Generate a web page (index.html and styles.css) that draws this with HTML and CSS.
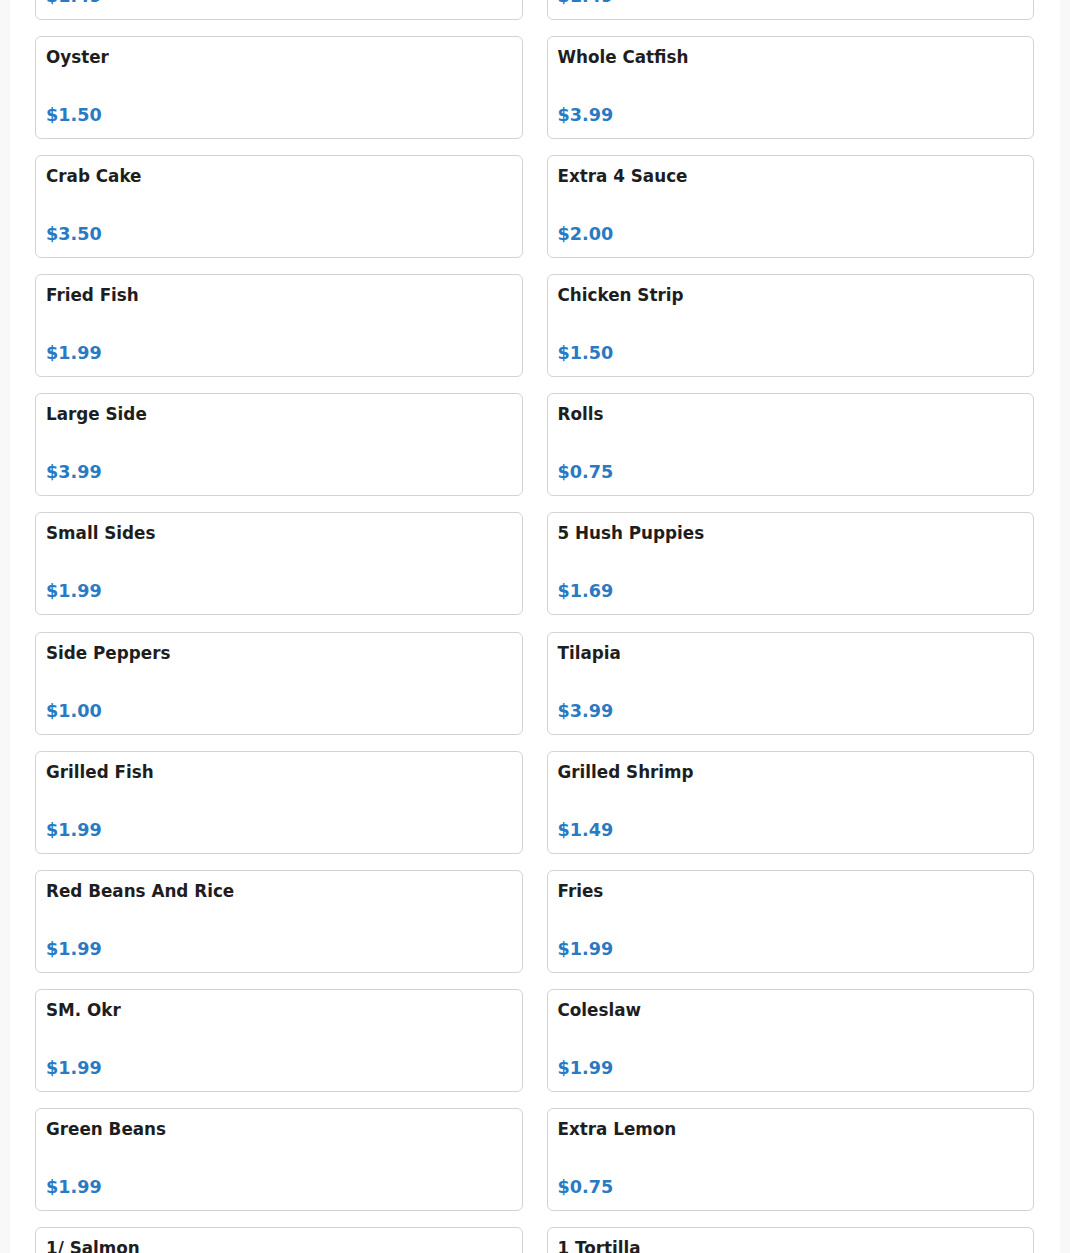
FILE: index.html
```html
<!DOCTYPE html>
<html lang="en">
<head>
<meta charset="utf-8">
<title>Menu</title>
<link rel="stylesheet" href="styles.css">
</head>
<body>
<main class="page">
  <div class="menu-grid">
    <div class="item"><h3 class="name">Shrimp</h3><p class="price">$1.49</p></div>
    <div class="item"><h3 class="name">Fried Shrimp</h3><p class="price">$1.49</p></div>
    <div class="item"><h3 class="name">Oyster</h3><p class="price">$1.50</p></div>
    <div class="item"><h3 class="name">Whole Catfish</h3><p class="price">$3.99</p></div>
    <div class="item"><h3 class="name">Crab Cake</h3><p class="price">$3.50</p></div>
    <div class="item"><h3 class="name">Extra 4 Sauce</h3><p class="price">$2.00</p></div>
    <div class="item"><h3 class="name">Fried Fish</h3><p class="price">$1.99</p></div>
    <div class="item"><h3 class="name">Chicken Strip</h3><p class="price">$1.50</p></div>
    <div class="item"><h3 class="name">Large Side</h3><p class="price">$3.99</p></div>
    <div class="item"><h3 class="name">Rolls</h3><p class="price">$0.75</p></div>
    <div class="item"><h3 class="name">Small Sides</h3><p class="price">$1.99</p></div>
    <div class="item"><h3 class="name">5 Hush Puppies</h3><p class="price">$1.69</p></div>
    <div class="item"><h3 class="name">Side Peppers</h3><p class="price">$1.00</p></div>
    <div class="item"><h3 class="name">Tilapia</h3><p class="price">$3.99</p></div>
    <div class="item"><h3 class="name">Grilled Fish</h3><p class="price">$1.99</p></div>
    <div class="item"><h3 class="name">Grilled Shrimp</h3><p class="price">$1.49</p></div>
    <div class="item"><h3 class="name">Red Beans And Rice</h3><p class="price">$1.99</p></div>
    <div class="item"><h3 class="name">Fries</h3><p class="price">$1.99</p></div>
    <div class="item"><h3 class="name">SM. Okr</h3><p class="price">$1.99</p></div>
    <div class="item"><h3 class="name">Coleslaw</h3><p class="price">$1.99</p></div>
    <div class="item"><h3 class="name">Green Beans</h3><p class="price">$1.99</p></div>
    <div class="item"><h3 class="name">Extra Lemon</h3><p class="price">$0.75</p></div>
    <div class="item"><h3 class="name">1/ Salmon</h3><p class="price">$4.99</p></div>
    <div class="item"><h3 class="name">1 Tortilla</h3><p class="price">$0.50</p></div>
  </div>
</main>
</body>
</html>
```

FILE: styles.css
```css
html, body {
  margin: 0;
  padding: 0;
  background: #f8f8f8;
  height: 100%;
  overflow: hidden;
}

body {
  font-family: "DejaVu Sans", "Liberation Sans", sans-serif;
  color: #1c1c1c;
}

.page {
  max-width: 1050px;
  margin: 0 auto;
  background: #ffffff;
  padding: 0 26px 40px 25px;
  box-sizing: border-box;
  min-height: 100%;
}

.menu-grid {
  display: grid;
  grid-template-columns: 1fr 1fr;
  column-gap: 24px;
  row-gap: 16.1px;
  margin-top: -83px;
}

.item {
  border: 1px solid #d3d3d3;
  border-radius: 6px;
  padding: 10px;
  display: flex;
  flex-direction: column;
  background: #ffffff;
}

.name {
  margin: 0 0 38px;
  font-size: 16.8px;
  font-weight: 700;
  line-height: normal;
  color: #1e1e1e;
}

.price {
  margin: 0 0 3px;
  font-size: 17.6px;
  font-weight: 700;
  line-height: normal;
  color: #2a7ac3;
}
```
